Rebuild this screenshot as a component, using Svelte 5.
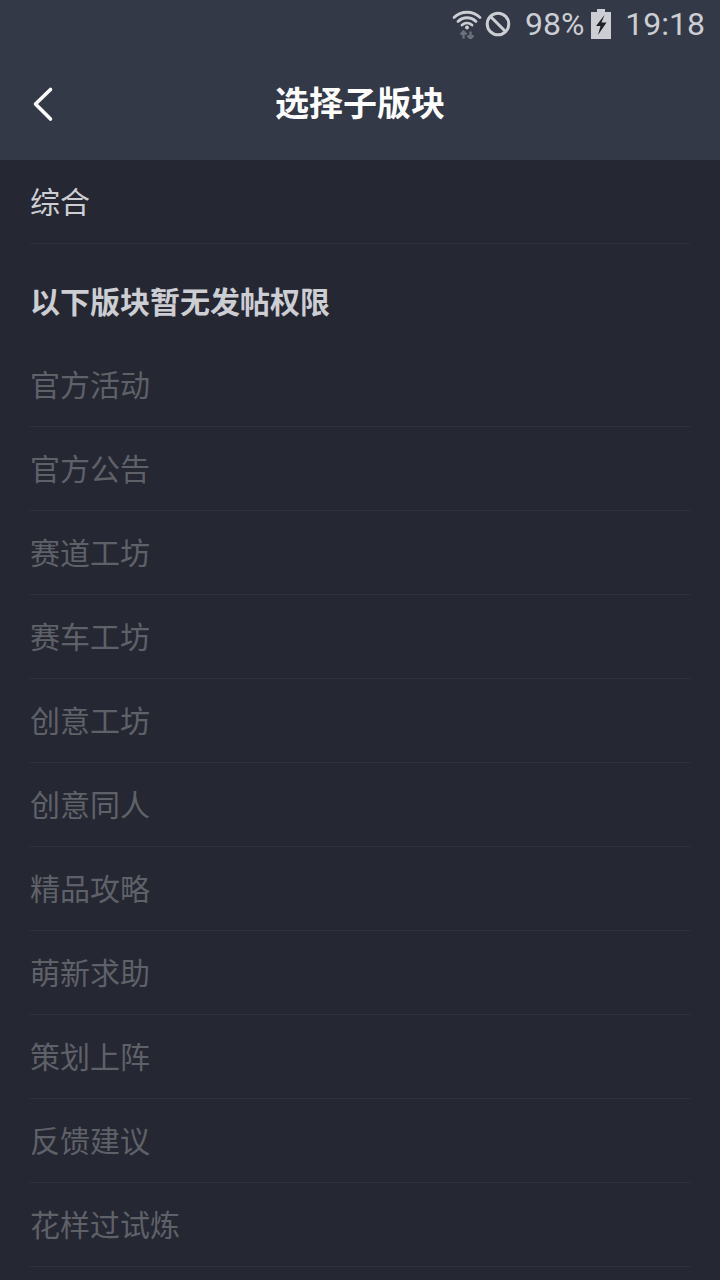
<script>
  const rows = ['官方活动','官方公告','赛道工坊','赛车工坊','创意工坊','创意同人','精品攻略','萌新求助','策划上阵','反馈建议','花样过试炼'];
</script>

<div class="screen">
  <header class="head">
    <div class="status">
      <svg class="wifi" width="30" height="30" viewBox="0 0 30 30" fill="none">
        <g stroke="#ccced3" stroke-width="2.800" stroke-linecap="round">
          <path d="M2 8.500C9 1.500 21 1.500 28 8.500" />
          <path d="M6 12.500C11 7.500 19 7.500 24 12.500" />
          <path d="M10 16C13 13.500 17 13.500 20 16" />
        </g>
        <circle cx="15" cy="18.500" r="2" fill="#ccced3" />
        <path d="M11.500 22.500V29.500M8.500 25.500L11.500 22.500L14.500 25.500M18.500 29.500V22.500M15.500 26.500L18.500 29.500L21.500 26.500" stroke="#6d717b" stroke-width="2.400" />
      </svg>
      <svg class="mute" width="26" height="26" viewBox="0 0 26 26" fill="none" stroke="#ccced3" stroke-width="3">
        <circle cx="13" cy="13" r="10.800" />
        <path d="M5.500 5.500L20.500 20.500" />
      </svg>
      <span class="pct">98%</span>
      <svg class="batt" width="20" height="30" viewBox="0 0 20 30">
        <path d="M6 0H14V3H20V30H0V3H6Z" fill="#ccced3" />
        <path d="M13.500 6L5 17H9.500L7 26L15.500 13.500H10.500L13.500 6Z" fill="#1f2129" />
      </svg>
      <span class="time">19:18</span>
    </div>
    <div class="nav">
      <svg class="back" width="24" height="36" viewBox="0 0 24 36" fill="none" stroke="#fff" stroke-width="3.600" stroke-linecap="round" stroke-linejoin="round">
        <path d="M19.500 3.500L4.500 18L19.500 33" />
      </svg>
      <h1>选择子版块</h1>
    </div>
  </header>

  <main class="list">
    <div class="row active">综合</div>
    <h2>以下版块暂无发帖权限</h2>
    {#each rows as r}
      <div class="row">{r}</div>
    {/each}
  </main>
</div>

<style>
  :global(body) { margin: 0; background: #252732; }
  .screen {
    width: 720px;
    height: 1280px;
    overflow: hidden;
    background: #252732;
    font-family: "Noto Sans CJK SC", "Roboto", sans-serif;
  }
  .head { background: #333947; height: 160px; }
  .status {
    height: 48px;
    display: flex;
    align-items: center;
    justify-content: flex-end;
    padding-right: 15px;
    color: #ccced3;
    font-family: "Roboto", sans-serif;
    font-size: 32px;
  }
  .wifi { margin-right: 3px; }
  .mute { margin-right: 14px; }
  .pct { margin-right: 7px; }
  .batt { margin-right: 14px; }
  .nav {
    position: relative;
    height: 112px;
    display: flex;
    align-items: center;
    justify-content: center;
  }
  .back { position: absolute; left: 31px; top: 38px; }
  h1 {
    margin: -4px 0 0;
    font-size: 34px;
    line-height: 40px;
    font-weight: 700;
    color: #fff;
  }
  .list { padding: 0 30px; }
  .row {
    height: 84px;
    box-sizing: border-box;
    padding-bottom: 4px;
    border-bottom: 1px solid #2f313c;
    display: flex;
    align-items: center;
    font-size: 30px;
    color: #5f6169;
  }
  .active { color: #ccced3; }
  h2 {
    margin: 0;
    height: 99px;
    display: flex;
    align-items: center;
    padding-top: 12px;
    box-sizing: border-box;
    font-size: 30px;
    font-weight: 700;
    color: #ccced3;
  }
</style>
